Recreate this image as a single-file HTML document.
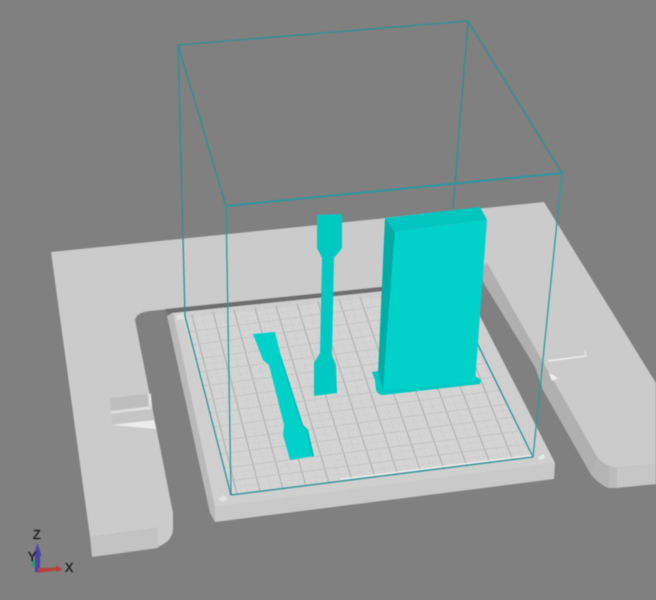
<!DOCTYPE html>
<html lang="en">
<head>
<meta charset="utf-8">
<title>3D print bed</title>
<style>
html,body{margin:0;padding:0;background:#808080;}
body{width:656px;height:600px;overflow:hidden;}
svg{display:block;}
text{font-family:"Liberation Sans",sans-serif;font-size:12.5px;fill:#151515;stroke:#151515;stroke-width:0.25px;}
</style>
</head>
<body>
<svg width="656" height="600" viewBox="0 0 656 600" xmlns="http://www.w3.org/2000/svg">
<defs>
<filter id="b" x="-5%" y="-5%" width="110%" height="110%"><feGaussianBlur stdDeviation="0.55"/></filter>
<filter id="b2" x="-5%" y="-5%" width="110%" height="110%"><feGaussianBlur stdDeviation="0.45"/></filter>
</defs>
<rect width="656" height="600" fill="#808080"/>
<g filter="url(#b)">
<!-- right arm side face -->
<path d="M487 263 L540 357 L597 457 L617 468 L656 464 L656 484 L608 488 Q596 482 590 473 L543 390 L535 367 L483 282 L476 262 Z" fill="#b0b0b0"/>
<path d="M597 457 Q605 466 617 468 L617 488 L608 488 Q596 482 590 473 Z" fill="#b4b4b4"/>
<path d="M609 466 L617 468 L617 488 L609 488 Z" fill="#bcbcbc"/>
<path d="M617 468 L656 464 L656 484 L617 488 Z" fill="#c6c6c6"/>
<!-- bed top -->
<path d="M51 252 L544 202 L656 383 L656 464 L617 468 Q605 466 597 457 L540 357 L487 263 L478 270 L470 278 L150 311 Q137 312 135 320 L173 513 L173 530 Q172 541 158 547 L158 528 L90 537 Z" fill="#cbcbcb"/>
<!-- left arm front -->
<path d="M90 537 L158 528 L158 548 L92 557 Z" fill="#c3c3c3"/>
<!-- left marks -->
<path d="M110 398 L148 394 L150 407 L111 411 Z" fill="#bebebe"/>
<path d="M111 411 L151 406 L152 409 L111 414 Z" fill="#dedede"/>
<path d="M112 425 L154 420 L156 429 Z" fill="#ececec"/>
<path d="M111 414 L152 409 L154 420 L112 424 Z" fill="#c5c5c5"/>
<path d="M148 393 L151 394 L152 406 L149 406 Z" fill="#e3e3e3"/>
<!-- right marks -->
<path d="M548 361 L585 356" stroke="#eeeeee" stroke-width="1.4" fill="none"/>
<path d="M585 350 L586 357" stroke="#e6e6e6" stroke-width="1.2" fill="none"/>
<path d="M549 373 L558 378 L552 381 Z" fill="#efefef"/>
<!-- shadow strip behind plate -->
<path d="M165 309 L478 277 L480 286 L170 319 Z" fill="#6e6e6e"/>
<!-- plate -->
<path d="M167 316 L172 313 L463 283 L555 463 L554 478 L215 522 L210 513 Z" fill="#b9b9b9"/>
<path d="M215 507 L555 463 L554 479 L215 522 Z" fill="#c9c9c9"/>
<path d="M173 313 L463 283 L555 463 L215 507 Z" fill="#cfcfcf"/>
<path d="M182 318 L449 290 L533 458 L231 496 Z" fill="#d4d4d4"/>
</g>
<!-- grid -->
<g filter="url(#b2)" fill="none">
<path stroke="#aaaaaa" stroke-width="1" d="M192 315L237 494M213 312L260 491M234 310L283 489M255 308L306 486M276 306L329 483M297 304L352 480M318 302L375 477M339 299L398 475M360 297L421 472M381 295L444 469M402 293L467 466M423 291L490 463M444 289L513 460"/>
<path stroke="#c2c2c2" stroke-width="0.8" d="M188 332L455 296M191 345L462 309M195 359L468 323M198 372L475 336M202 386L481 350M206 400L488 363M209 413L494 377M213 427L501 390M216 441L507 404M220 454L514 417M224 468L520 431M227 481L527 444"/>
<path stroke="#c6c6c6" stroke-width="0.6" stroke-dasharray="3 2" d="M202 314L248 493M223 311L271 490M244 309L294 487M265 307L317 484M286 305L340 481M307 303L363 478M328 300L386 476M349 298L409 473M370 296L432 470M391 294L455 467M412 292L478 464M433 290L501 461M454 288L523 459"/>
<path stroke="#c8c8c8" stroke-width="0.6" stroke-dasharray="3 2" d="M186 325L452 289M189 338L458 302M193 352L465 316M196 365L471 329M200 379L478 343M204 393L484 356M207 406L491 370M211 420L497 383M214 434L504 397M218 447L510 410M222 461L517 424M225 474L523 437M229 488L530 451"/>
</g>
<g filter="url(#b2)">
<path d="M218 499 L224 495 L228 499 L222 502 Z" fill="#e2e2e2"/>
<path d="M176 316 L183 313 L185 318 L178 320 Z" fill="#e2e2e2"/>
<path d="M538 457 L544 454 L545 458 L540 460 Z" fill="#e9e9e9"/>
<path d="M340 481 L533 457" stroke="#f2f2f2" stroke-width="1.4" fill="none" transform="translate(0,-1.6)"/>
</g>
<!-- box back lines -->
<g fill="none" stroke="#2c8f98" stroke-width="1.3" filter="url(#b2)">
<path d="M178 45 L468 21 L562 173 L226 206 Z"/>
<path d="M178 45 L185 316"/>
<path d="M468 21 L453 208"/>
<path d="M185 316 L231 495"/>
<path d="M231 495 L533 457"/>
<path d="M533 457 L477 343"/>
</g>
<!-- specimens -->
<g filter="url(#b2)">
<path d="M253 334 L275 332 L281 356 L303 425 L308 430 L314 456 L290 460 L283 435 L284 425 L269 365 L263 360 Z" fill="#00d2ca"/>
<path d="M279 354 L301 425 L306 430 L312 457 L314 456 L308 430 L303 425 L281 356 Z" fill="#00bdb6"/>
<path d="M317 215 L342 214 L342 248 L334 258 L332 355 L336 365 L337 393 L314 396 L314 363 L320 353 L322 258 L317 248 Z" fill="#00c9c2"/>
<!-- block -->
<path d="M372 372 L378 371 L475 376 L481 380 L480 384 L383 395 Q378 395 376 390 L375 380 Z" fill="#00c9c2"/>
<path d="M385 218 L395 232 L383 390 L378 373 Z" fill="#00aca6"/>
<path d="M395 232 L487 220 L475 382 L383 390 Z" fill="#00d2ca"/>
<path d="M385 218 L480 207 L487 220 L395 232 Z" fill="#00c6bf"/>
</g>
<!-- front box lines -->
<g fill="none" stroke="#2c9aa2" stroke-width="1.3" filter="url(#b2)">
<path d="M226 206 L231 495"/>
<path d="M562 173 L533 457"/>
<path d="M226 206 L562 173"/>
</g>
<!-- axes -->
<g filter="url(#b2)">
<path d="M32 560 L36 560 L36 567 L32 567 Z" fill="#2e9a5c"/>
<path d="M35 553 L40 553 L40 572 L35 572 Z" fill="#4a43a8"/>
<path d="M37.5 543 L41.5 556 L33.5 556 Z" fill="#4a43a8"/>
<path d="M38 568 L56 567.5 L56 565.5 L63 569.5 L56 572 L56 570.5 L38 573 Z" fill="#b2433f"/>
</g>
<g filter="url(#b2)">
<text x="33" y="539">Z</text>
<text x="28" y="561">Y</text>
<text x="65" y="572">X</text>
</g>
</svg>
</body>
</html>
